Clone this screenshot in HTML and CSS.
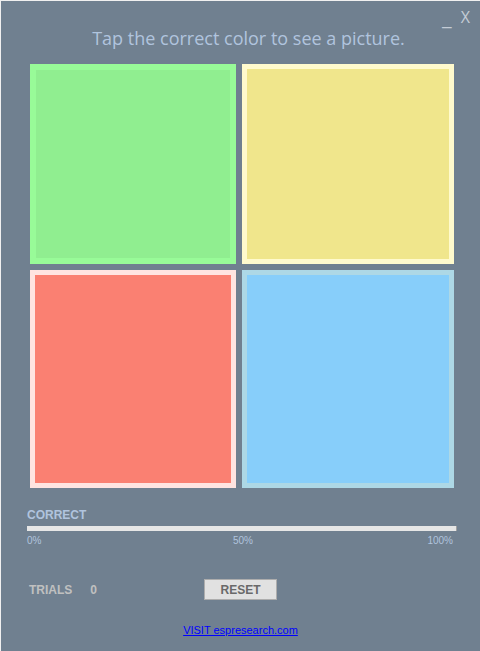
FILE: index.html
```html
<!DOCTYPE html>
<html>

<head>
  <meta charset="UTF-8">
  <title>Color Tap</title>
  <link rel="stylesheet" href="styles.css">
</head>

<body>

  <main class="window">
    <div class="controls">
      <span class="min">_</span>
      <span class="close">X</span>
    </div>
    <h1 class="title">Tap the correct color to see a picture.</h1>

    <div class="tiles">
      <div class="tile green"></div>
      <div class="tile yellow"></div>
      <div class="tile red"></div>
      <div class="tile blue"></div>
    </div>

    <div class="progress">
      <div class="label">CORRECT</div>
      <div class="bar"></div>
      <div class="marks">
        <span>0%</span>
        <span class="mid">50%</span>
        <span class="end">100%</span>
      </div>
    </div>

    <div class="trials">
      <span class="trials-label">TRIALS</span>
      <span class="trials-count">0</span>
      <button class="reset">RESET</button>
    </div>

    <div class="footer">
      <a href="#">VISIT espresearch.com</a>
    </div>
  </main>

</body>

</html>
```

FILE: styles.css
```css
body {
  margin: 0;
  background-color: #f0f0f0;
  font-family: "Liberation Sans", Arial, sans-serif;
}

.window {
  margin: 1px 0 0 1px;
  height: 650px;
  background-color: #708090;
  display: flex;
  flex-direction: column;
}

.controls {
  display: flex;
  justify-content: flex-end;
  align-items: flex-end;
  gap: 9px;
  padding: 8px 10px 0 0;
  height: 16px;
  color: #c4ccd6;
  font-family: "Open Sans", sans-serif;
  font-size: 16px;
  line-height: 16px;
}

.min {
  font-size: 22px;
  line-height: 18px;
}

.title {
  margin: 1px 0 0 0;
  text-align: center;
  font-family: "Open Sans", sans-serif;
  font-weight: normal;
  font-size: 18px;
  line-height: 24px;
  color: #b0c4de;
  padding-left: 16px;
}

.tiles {
  display: grid;
  grid-template-columns: 206px 212px;
  grid-template-rows: 200px 218px;
  gap: 6px;
  margin: 14px 0 0 29px;
}

.tile {
  box-sizing: border-box;
  border: 5px solid;
}

.green {
  background-color: #90ee90;
  border-color: #98fb98;
  border-width: 6px;
}

.yellow {
  background-color: #f0e68c;
  border-color: #fffacd;
}

.red {
  background-color: #fa8072;
  border-color: #ffe4e1;
}

.blue {
  background-color: #87cefa;
  border-color: #add8e6;
}

.progress {
  margin: 20px 0 0 26px;
  width: 430px;
}

.label {
  font-size: 12px;
  font-weight: bold;
  color: #b0c4de;
  line-height: 14px;
}

.bar {
  margin-top: 4px;
  height: 5px;
  background-color: #e6e6e6;
  border-right: 1px solid #a0a0a0;
}

.marks {
  display: grid;
  grid-template-columns: 1fr auto 1fr;
  padding-right: 4px;
  margin-top: 4px;
  font-size: 10px;
  line-height: 12px;
  color: #b0c4de;
}

.mid {
  padding-left: 6px;
}

.end {
  text-align: right;
}

.trials {
  display: flex;
  align-items: center;
  margin: 32px 0 0 28px;
  height: 21px;
  font-size: 12px;
  font-weight: bold;
  color: #c0c0c0;
}

.trials-count {
  margin-left: 18px;
}

.reset {
  margin-left: 107px;
  width: 73px;
  height: 21px;
  padding: 0;
  background-color: #e1e1e1;
  border: 1px solid #adadad;
  color: #696969;
  font-family: "Liberation Sans", Arial, sans-serif;
  font-size: 12px;
  font-weight: bold;
}

.footer {
  margin-top: 24px;
  text-align: center;
  font-size: 11px;
}

.footer a {
  color: #0000ff;
}
```
